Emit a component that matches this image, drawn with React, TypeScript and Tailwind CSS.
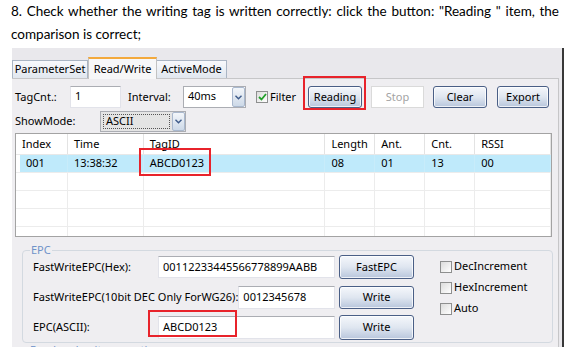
import { ReactNode } from "react";

function WinButton({ label, className = "" }: { label: string; className?: string }) {
  return (
    <div
      className={`flex items-center justify-center rounded-[3px] border border-[#4a5f86] bg-linear-to-b from-[#f5f7fb] via-[#dfe6f0] to-[#b8c6dc] shadow-[inset_0_0_0_1px_rgba(255,255,255,0.75)] text-black ${className}`}
    >
      {label}
    </div>
  );
}

function TextBox({ value, className = "" }: { value: string; className?: string }) {
  return (
    <div
      className={`flex items-center border border-[#e2e3ea] border-t-[#abadb3] bg-white pl-[4px] text-black ${className}`}
    >
      {value}
    </div>
  );
}

function ComboArrow() {
  return (
    <div className="flex h-full w-[13px] items-center justify-center rounded-[2px] border border-[#a9b8ce] bg-linear-to-b from-[#f3f6fa] to-[#cdd9e8]">
      <svg width="7" height="5" viewBox="0 0 7 5">
        <path d="M0.5 0.8 L3.5 3.8 L6.5 0.8" fill="none" stroke="#3d5a8a" strokeWidth="1.4" />
      </svg>
    </div>
  );
}

function CheckBox({ checked = false }: { checked?: boolean }) {
  return (
    <div className="flex h-[12px] w-[12px] items-center justify-center border border-[#8e8f8f] bg-linear-to-br from-[#dcdcdc] to-white">
      {checked && (
        <svg width="9" height="8" viewBox="0 0 9 8">
          <path d="M1 4 L3.5 6.5 L8 1" fill="none" stroke="#22a02a" strokeWidth="1.8" />
        </svg>
      )}
    </div>
  );
}

function Cell({ children, w, className = "" }: { children?: ReactNode; w: string; className?: string }) {
  return <div className={`flex h-full items-center border-r pl-[6px] ${w} ${className}`}>{children}</div>;
}

export default function App() {
  const cols = ["w-[52px]", "w-[76px]", "w-[182px]", "w-[50px]", "w-[50px]", "w-[50px]", "w-[76px]"];
  const header = ["Index", "Time", "TagID", "Length", "Ant.", "Cnt.", "RSSI"];
  const row = ["001", "13:38:32", "ABCD0123", "08", "01", "13", "00"];

  return (
    <div className="h-[357px] w-[570px] overflow-hidden bg-white">
      <div className="px-[11px] font-['Lato',sans-serif] text-[13.5px] leading-[23px] text-black">
        <div className="text-justify [text-align-last:justify]">
          8. Check whether the writing tag is written correctly: click the button: "Reading " item, the
        </div>
        <div>comparison is correct;</div>
      </div>

      <div className="ml-[12px] mt-[2px] h-[299px] w-[552px] overflow-hidden border-r-2 border-[#383838] bg-[#e9e8ec] font-['Noto_Sans',sans-serif] text-[11px] text-black">
        {/* tabs */}
        <div className="flex h-[30px] items-end">
          <div className="flex h-[18px] w-[76px] items-center justify-center border border-b-0 border-[#aab5c4] bg-linear-to-b from-[#f8f9fc] to-[#e1e7ef]">
            ParameterSet
          </div>
          <div className="relative z-10 mb-[-1px] flex h-[22px] w-[69px] items-center justify-center border border-b-0 border-t-2 border-[#c2c2c2] border-t-[#f3a93c] bg-[#f7f7f8]">
            Read/Write
          </div>
          <div className="flex h-[18px] w-[70px] items-center justify-center border border-b-0 border-l-0 border-[#aab5c4] bg-linear-to-b from-[#f8f9fc] to-[#e1e7ef]">
            ActiveMode
          </div>
        </div>

        {/* panel */}
        <div className="h-[300px] w-[547px] border-r border-t border-[#c6c6c8] bg-[#efeef1] pl-[3px] pt-[7px]">
          <div className="flex h-[22px] items-center">
            <div className="w-[55px]">TagCnt.:</div>
            <TextBox value="1" className="h-[22px] w-[51px] items-start pt-[1px]" />
            <div className="ml-[7px] w-[55px]">Interval:</div>
            <div className="flex h-[22px] w-[63px] items-stretch border border-[#abadb3] bg-white">
              <div className="flex flex-1 items-start pl-[4px] pt-[1px]">40ms</div>
              <ComboArrow />
            </div>
            <div className="ml-[10px] flex w-[52px] items-center gap-[2px]">
              <CheckBox checked />
              <span>Filter</span>
            </div>
            <div className="relative">
              <WinButton label="Reading" className="h-[22px] w-[54px]" />
              <div className="absolute -bottom-[2px] -left-[5px] -right-[4px] -top-[10px] border-2 border-[#e8232b]" />
            </div>
            <div className="ml-[9px] flex h-[22px] w-[53px] items-center justify-center border border-[#dadada] bg-white text-[#a3a3a3]">
              Stop
            </div>
            <WinButton label="Clear" className="ml-[9px] h-[22px] w-[54px]" />
            <WinButton label="Export" className="ml-[10px] h-[22px] w-[52px]" />
          </div>

          <div className="mt-[3px] flex h-[21px] items-center">
            <div className="w-[85px]">ShowMode:</div>
            <div className="flex h-[21px] w-[86px] items-stretch border border-[#abadb3] bg-[#e4e4e4]">
              <div className="m-[2px] flex flex-1 items-center border border-dotted border-[#555] pl-[2px]">ASCII</div>
              <ComboArrow />
            </div>
          </div>

          {/* table */}
          <div className="relative mt-[1px] h-[104px] w-[537px] overflow-hidden border border-[#a3a3a3] bg-white">
            <div className="flex h-[21px] border-b border-[#e8e8e8]">
              {header.map((h, i) => (
                <Cell key={h} w={cols[i]} className="border-[#e3e3e3]">
                  {h}
                </Cell>
              ))}
            </div>
            <div className="flex h-[18px] border-b border-[#ececec]">
              {row.map((v, i) => (
                <Cell key={i} w={cols[i]} className={`border-[#c8ecfa] bg-[#bfeafb] ${i === 0 ? "ml-[4px] !w-[48px] pl-[2px]" : ""}`}>
                  {v}
                </Cell>
              ))}
            </div>
            {[0, 1, 2, 3].map((r) => (
              <div key={r} className="flex h-[18px] border-b border-[#ececec]">
                {cols.map((c, i) => (
                  <Cell key={i} w={c} className="border-[#ececec]" />
                ))}
              </div>
            ))}
            <div className="absolute left-[123px] top-[14px] h-[28px] w-[72px] border-2 border-[#e8232b]" />
          </div>

          {/* EPC group */}
          <div className="relative ml-[7px] mt-[13px] flex h-[93px] w-[531px] rounded-[4px] border border-[#d3d9e0] pl-[10px] pt-[4px]">
            <span className="absolute -top-[9px] left-[7px] bg-[#efeef1] px-[1px] text-[#6f93c9]">EPC</span>
            <div className="flex w-[381px] flex-col gap-[6px]">
              <div className="flex h-[24px] items-center">
                <div className="flex-1">FastWriteEPC(Hex):</div>
                <TextBox value="00112233445566778899AABB" className="h-[22px] w-[177px]" />
                <WinButton label="FastEPC" className="ml-[4px] h-[24px] w-[75px]" />
              </div>
              <div className="flex h-[24px] items-center">
                <div className="flex-1 whitespace-nowrap">FastWriteEPC(10bit DEC Only ForWG26):</div>
                <TextBox value="0012345678" className="h-[23px] w-[97px]" />
                <WinButton label="Write" className="ml-[4px] h-[23px] w-[75px]" />
              </div>
              <div className="flex h-[24px] items-center">
                <div className="flex-1">EPC(ASCII):</div>
                <div className="relative">
                  <TextBox value="ABCD0123" className="h-[23px] w-[177px]" />
                  <div className="absolute -left-[10px] -top-[6px] h-[27px] w-[89px] border-2 border-[#e8232b]" />
                </div>
                <WinButton label="Write" className="ml-[4px] h-[25px] w-[75px]" />
              </div>
            </div>
            <div className="ml-[26px] flex flex-col pt-[1px]">
              {["DecIncrement", "HexIncrement", "Auto"].map((t) => (
                <div key={t} className="flex h-[21px] items-center gap-[2px]">
                  <CheckBox />
                  <span>{t}</span>
                </div>
              ))}
            </div>
          </div>
          <div className="ml-[15px] mt-[-1px] text-[#6f93c9]">Read and write operation</div>
        </div>
      </div>
    </div>
  );
}
